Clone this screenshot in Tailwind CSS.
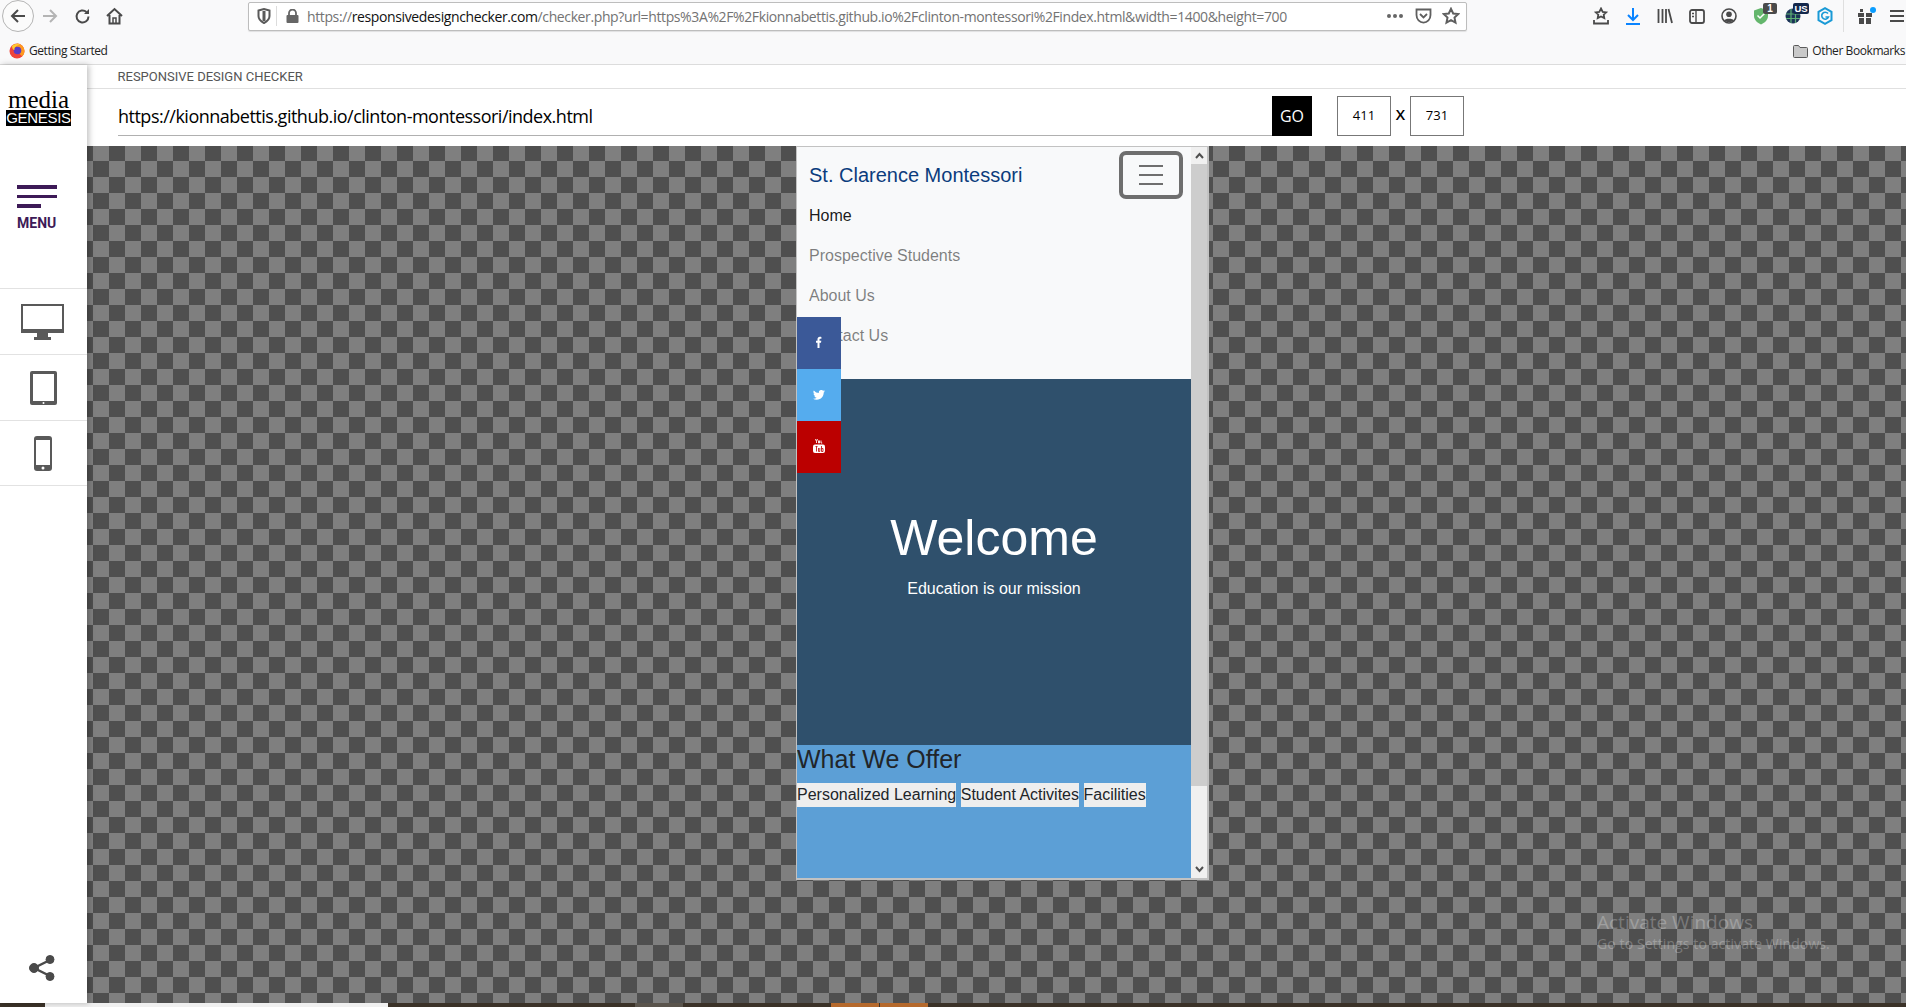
<!DOCTYPE html>
<html lang="en">
<head>
<meta charset="utf-8">
<title>Responsive Design Checker</title>
<script src="https://cdn.jsdelivr.net/npm/@tailwindcss/browser@4"></script>
</head>
<body class="bg-white">
<div class="w-[1906px] h-[1007px] overflow-hidden flex flex-col font-['Liberation_Sans',sans-serif]">

  <!-- browser chrome -->
  <header class="h-[65px] shrink-0 bg-[#f9f9fa] border-b border-[#dcdcdc] flex flex-col">
    <div class="h-8 flex items-center pl-[2px]">
      <div class="w-8 h-8 shrink-0 flex items-center justify-center rounded-full border border-[#b5b5b5] bg-[#fbfbfb]">
        <svg width="18" height="18" viewBox="0 0 18 18" fill="none" stroke="#4a4a4a" stroke-width="2"><path d="M16 9H3M9 3L3 9l6 6"/></svg>
      </div>
      <div class="w-8 h-8 shrink-0 flex items-center justify-center">
        <svg width="18" height="18" viewBox="0 0 18 18" fill="none" stroke="#b4b4b4" stroke-width="2"><path d="M2 9h13M9 3l6 6-6 6"/></svg>
      </div>
      <div class="w-8 h-8 shrink-0 flex items-center justify-center">
        <svg width="17" height="17" viewBox="0 0 17 17" fill="none" stroke="#4a4a4a" stroke-width="2"><path d="M14.5 8.500a6 6 0 1 1-2-4.500"/><path d="M15 1v5h-5z" fill="#4a4a4a" stroke="none"/></svg>
      </div>
      <div class="w-8 h-8 shrink-0 flex items-center justify-center">
        <svg width="17" height="18" viewBox="0 0 17 18" fill="none" stroke="#4a4a4a" stroke-width="2"><path d="M1 9l7.500-7L16 9M3.500 8v8.500h10V8"/><path d="M7 16.500V11h3v5.500" stroke-width="1.500"/></svg>
      </div>
      <div class="ml-[118px] w-[1219px] shrink-0 h-[29px] bg-white border border-[#bdbdbd] rounded-[2px] shadow-[0_1px_1px_rgba(0,0,0,0.1)] flex items-center">
        <div class="w-[27px] pl-[2px] flex justify-center">
          <svg width="14" height="16" viewBox="0 0 14 16" fill="none" stroke="#5a5a5a" stroke-width="2"><path d="M1.500 2.500 7 1l5.500 1.500V8c0 3-2.500 5.500-5.500 7C4 13.500 1.500 11 1.500 8z"/><path d="M7 3v10" stroke-width="3" stroke="#5a5a5a"/></svg>
        </div>
        <div class="w-px h-5 bg-[#dcdcdc]"></div>
        <div class="ml-[9px] w-[13px]">
          <svg width="13" height="14" viewBox="0 0 13 14" fill="none"><rect x="0.500" y="6" width="12" height="8" rx="1" fill="#666"/><path d="M3 7V4a3.500 3.500 0 0 1 7 0v3" stroke="#666" stroke-width="1.800"/></svg>
        </div>
        <div class="ml-[8px] text-[14px] whitespace-nowrap text-[#737373] font-['Open_Sans',sans-serif] tracking-[-0.385px]">https://<span class="text-[#111]">responsivedesignchecker.com</span>/checker.php?url=https%3A%2F%2Fkionnabettis.github.io%2Fclinton-montessori%2Findex.html&amp;width=1400&amp;height=700</div>
        <div class="ml-auto flex items-center pr-[1px]">
          <div class="w-7 flex justify-center gap-[2px]">
            <span class="w-[4px] h-[4px] rounded-full bg-[#666]"></span><span class="w-[4px] h-[4px] rounded-full bg-[#666]"></span><span class="w-[4px] h-[4px] rounded-full bg-[#666]"></span>
          </div>
          <div class="w-7 flex justify-center">
            <svg width="17" height="16" viewBox="0 0 17 16" fill="none" stroke="#5f5f5f" stroke-width="1.800"><path d="M1.500 1.500h14V7a6.500 7 0 0 1-14 0z"/><path d="M5 6l3.500 3.500L12 6"/></svg>
          </div>
          <div class="w-7 flex justify-center">
            <svg width="18" height="18" viewBox="0 0 18 18" fill="none" stroke="#5f5f5f" stroke-width="2"><path d="M9 1.800l2.200 4.700 5 .6-3.700 3.500 1 5L9 13.200l-4.500 2.400 1-5L1.800 7.100l5-.6z"/></svg>
          </div>
        </div>
      </div>
      <div class="ml-[118px] shrink-0 flex items-center">
        <div class="w-8 shrink-0 flex justify-center">
          <svg width="16" height="18" viewBox="0 0 16 18" fill="none" stroke="#4a4a4a" stroke-width="1.800"><path d="M8 1.500l1.700 3.300 3.500.5-2.500 2.400.6 3.400L8 9.500 4.700 11.100l.6-3.400L2.800 5.300l3.500-.5z"/><path d="M1 13v3.500h14V13"/></svg>
        </div>
        <div class="w-8 shrink-0 flex justify-center">
          <svg width="14" height="17" viewBox="0 0 14 17" fill="none" stroke="#0a84ff" stroke-width="2"><path d="M7 0v11M2 7l5 5 5-5M0 16h14"/></svg>
        </div>
        <div class="w-8 shrink-0 flex justify-center">
          <svg width="16" height="16" viewBox="0 0 16 16" fill="none" stroke="#4a4a4a" stroke-width="1.800"><path d="M1.500 1v14M5.500 1v14M9 1v14M11.500 1l3.500 14"/></svg>
        </div>
        <div class="w-8 shrink-0 flex justify-center">
          <svg width="16" height="15" viewBox="0 0 16 15" fill="none" stroke="#4a4a4a" stroke-width="1.800"><rect x="1" y="1" width="14" height="13" rx="2"/><path d="M7 1v13M3 4.500h2M3 7.500h2" stroke-width="1.400"/></svg>
        </div>
        <div class="w-8 shrink-0 flex justify-center">
          <svg width="16" height="16" viewBox="0 0 16 16" fill="none"><circle cx="8" cy="8" r="7" stroke="#4a4a4a" stroke-width="1.600"/><circle cx="8" cy="6.200" r="2.800" fill="#4a4a4a"/><path d="M3 12.500c1-2.500 9-2.500 10 0-2 2-8 2-10 0z" fill="#4a4a4a"/></svg>
        </div>
        <div class="w-8 shrink-0 flex justify-center relative">
          <svg width="16" height="18" viewBox="0 0 16 18"><path d="M8 1l7 2.500V9c0 4-3.500 7-7 8.500C4.500 16 1 13 1 9V3.500z" fill="#64b66c"/><path d="M4.500 8.500l2.500 2.500 4.500-4.500" fill="none" stroke="#fff" stroke-width="1.500"/></svg>
          <span class="absolute left-[18px] top-[-4px] w-[14px] h-[11px] rounded-[2px] bg-[#4a4a4a] text-white text-[10px] leading-[11px] font-bold text-center">1</span>
        </div>
        <div class="w-8 shrink-0 flex justify-center relative">
          <svg width="16" height="16" viewBox="0 0 16 16" fill="none"><circle cx="8" cy="8" r="7.500" fill="#1d3557"/><path d="M1 6h14M1 10.500h14M6 1v14M10.500 1v14" stroke="#5db075" stroke-width="1.200"/></svg>
          <span class="absolute left-[16px] top-[-5px] w-[16px] h-[11px] rounded-[2px] bg-[#14284b] text-white text-[9.500px] leading-[11px] font-bold text-center">US</span>
        </div>
        <div class="w-8 shrink-0 flex justify-center">
          <svg width="16" height="18" viewBox="0 0 16 18" fill="none"><path d="M8 1.200l6.500 3.700v8.200L8 16.800l-6.500-3.700V4.900z" stroke="#1a9ad6" stroke-width="2"/><path d="M11 6.500a3.500 3.500 0 1 0 .5 3.500H8.500" stroke="#1a9ad6" stroke-width="1.600"/></svg>
        </div>
        <div class="w-px h-[32px] shrink-0 bg-[#dfdfdf] ml-[2px]"></div>
        <div class="w-8 shrink-0 ml-[5px] flex justify-center relative">
          <svg width="14" height="15" viewBox="0 0 14 15" fill="#4a4a4a"><rect x="0" y="4" width="6" height="4"/><rect x="8" y="4" width="6" height="4"/><rect x="1" y="9" width="5" height="6"/><rect x="8" y="9" width="5" height="6"/><rect x="2" y="0" width="3" height="3"/></svg>
          <span class="absolute left-[21px] top-[-2px] w-[6px] h-[6px] rounded-full bg-[#0a9dff]"></span>
        </div>
        <div class="w-8 shrink-0 flex flex-col items-center gap-[3px]">
          <span class="w-[14px] h-[2px] bg-[#4a4a4a]"></span><span class="w-[14px] h-[2px] bg-[#4a4a4a]"></span><span class="w-[14px] h-[2px] bg-[#4a4a4a]"></span>
        </div>
      </div>
    </div>
    <div class="flex-1 flex items-center pl-[9px] pr-[1px] pt-[5px] text-[12px] text-[#222] font-['Open_Sans',sans-serif] tracking-[-0.42px]">
      <svg width="16" height="16" viewBox="0 0 16 16"><circle cx="8" cy="8" r="7.500" fill="#f0443a"/><path d="M8 .5a7.500 7.500 0 0 1 7.500 7.500c0 2-1 4-2.500 5.300L8 8z" fill="#ff9a1f"/><circle cx="8.500" cy="7.500" r="3.800" fill="#5b3cc4"/><path d="M3 3c2-2 6-3 8-1.500-2 0-3 1-3.500 2C6 4 5 5 5.500 7 4 7 3 5 3 3z" fill="#ffcb2e"/></svg>
      <span class="ml-[4px]">Getting Started</span>
      <svg class="ml-auto" width="15" height="14" viewBox="0 0 15 14" fill="#c9c9c9" stroke="#5a5a5a"><path d="M.5 2.500a1 1 0 0 1 1-1h4l1.500 2h6.500a1 1 0 0 1 1 1v8a1 1 0 0 1-1 1h-12a1 1 0 0 1-1-1z"/></svg>
      <span class="ml-[4px] whitespace-nowrap">Other Bookmarks</span>
    </div>
  </header>

  <div class="flex-1 min-h-0 flex">
    <!-- tool sidebar -->
    <aside class="w-[87px] shrink-0 bg-white flex flex-col relative z-10 shadow-[2px_0_6px_rgba(0,0,0,0.25)]">
      <div class="h-[223px] shrink-0 flex flex-col">
        <div class="mt-[26px] w-[65px] ml-[6px] flex flex-col items-center">
          <span class="text-[25px] leading-[18px] text-black font-['Liberation_Serif',serif]">media</span>
          <span class="mt-[1px] w-[65px] h-[16px] bg-black text-white text-[15px] leading-[16px] text-center tracking-[-0.3px]">GENESIS</span>
        </div>
        <div class="mt-[59px] ml-[17px] flex flex-col gap-[6px]">
          <span class="w-10 h-[3.500px] bg-[#3d1a57]"></span>
          <span class="w-10 h-[3.500px] bg-[#3d1a57]"></span>
          <span class="w-6 h-[3.500px] bg-[#3d1a57]"></span>
        </div>
        <span class="mt-[8px] ml-[17px] text-[14px] leading-[14px] font-bold text-[#3d1a57] font-['Roboto',sans-serif]">MENU</span>
      </div>
      <div class="h-[66px] border-t border-[#e2e2e2] flex items-center justify-center">
        <svg class="mr-[2px]" width="43" height="36" viewBox="0 0 43 36"><path d="M0 0h43v29H27v4h3v3H13v-3h3v-4H0z" fill="#595959"/><rect x="2" y="2" width="39" height="23" fill="#fff"/></svg>
      </div>
      <div class="h-[66px] border-t border-[#e2e2e2] flex items-center justify-center">
        <svg class="mr-[1px]" width="27" height="34" viewBox="0 0 27 34"><rect width="27" height="34" rx="2" fill="#595959"/><rect x="3" y="3" width="21" height="27" fill="#fff"/><circle cx="13.500" cy="32" r="1" fill="#fff"/></svg>
      </div>
      <div class="h-[66px] border-t border-b border-[#e2e2e2] flex items-center justify-center">
        <svg class="mr-[2px]" width="18" height="35" viewBox="0 0 18 35"><rect width="18" height="35" rx="3" fill="#595959"/><rect x="2" y="4" width="14" height="25" fill="#fff"/><circle cx="9" cy="32" r="1.500" fill="#fff"/></svg>
      </div>
      <div class="mt-auto mb-[22px] flex justify-center pr-[3px]">
        <svg width="26" height="26" viewBox="0 0 26 26" fill="#4a4a4a" stroke="#4a4a4a"><path d="M21 5L5 13l16 8" fill="none" stroke-width="2.500"/><circle cx="21" cy="4.500" r="4"/><circle cx="5" cy="13" r="4.500"/><circle cx="21" cy="21.500" r="4"/></svg>
      </div>
    </aside>

    <main class="flex-1 min-w-0 flex flex-col bg-white">
      <div class="h-6 shrink-0 border-b border-[#e0e0e0] pl-[30.500px] flex items-center text-[13px] text-[#555] font-['Roboto',sans-serif]">RESPONSIVE DESIGN CHECKER</div>
      <div class="h-[57px] shrink-0 flex items-start pt-[7px] pl-[31px]">
        <div class="w-[1154px] h-[40px] pt-[2px] border-b border-[#b0b0b0] flex items-center text-[18px] text-black font-['Open_Sans',sans-serif] tracking-[-0.5px]">https://kionnabettis.github.io/clinton-montessori/index.html</div>
        <div class="w-10 h-10 bg-black text-white text-[16px] flex items-center justify-center font-['Open_Sans',sans-serif]">GO</div>
        <div class="ml-[25px] w-[54px] h-10 border border-[#777] flex items-center justify-center text-[13px] text-black font-['Open_Sans',sans-serif]">411</div>
        <div class="w-[19px] h-[37px] flex items-center justify-center text-[15px] font-semibold text-black font-['Open_Sans',sans-serif]">X</div>
        <div class="w-[54px] h-10 border border-[#777] flex items-center justify-center text-[13px] text-black font-['Open_Sans',sans-serif]">731</div>
      </div>

      <!-- canvas with the framed page -->
      <div class="flex-1 min-h-0 relative bg-[repeating-conic-gradient(#4f4f4f_0_25%,#7f7f7f_0_50%)] bg-[length:32px_32px] bg-[position:-10px_15px]">
        <div class="ml-[709px] w-[413px] h-[734px] border-t border-l border-r-2 border-b-2 border-[#c2c2c2] bg-[#f0f0f0] flex">
          <div class="w-[395px] h-[731px] relative flex flex-col overflow-hidden bg-white">
            <nav class="h-[232px] shrink-0 bg-[#f8f9fa] pr-[8px]">
              <div class="h-12 flex items-start">
                <span class="ml-3 mt-[14px] text-[20px] leading-[28px] text-[#0b3c7d]">St. Clarence Montessori</span>
                <div class="ml-auto mt-1 w-16 h-12 shrink-0 border-4 border-[#6e6e6e] rounded-[7px] flex flex-col items-center justify-center gap-[7px]">
                  <span class="w-6 h-[2px] bg-[#6e6e6e]"></span>
                  <span class="w-6 h-[2px] bg-[#6e6e6e]"></span>
                  <span class="w-6 h-[2px] bg-[#6e6e6e]"></span>
                </div>
              </div>
              <ul class="mt-[1px] text-[16px] leading-10 pl-3">
                <li class="text-black/90">Home</li>
                <li class="text-black/50">Prospective Students</li>
                <li class="text-black/50">About Us</li>
                <li class="text-black/50">Contact Us</li>
              </ul>
            </nav>
            <section class="h-[366px] shrink-0 bg-[#2f506c] text-white flex flex-col items-center pt-[130px]">
              <h1 class="text-[50px] leading-[58px]">Welcome</h1>
              <p class="mt-[10px] text-[16px] leading-6">Education is our mission</p>
            </section>
            <section class="flex-1 bg-[#5c9fd6] text-[#212529]">
              <h2 class="text-[25px] leading-[29px]">What We Offer</h2>
              <div class="mt-[9px] flex gap-[4.500px] text-[16px] leading-6">
                <a class="bg-[#eeeeee]">Personalized Learning</a>
                <a class="bg-[#eeeeee]">Student Activites</a>
                <a class="bg-[#eeeeee]">Facilities</a>
              </div>
            </section>
            <!-- floating social bar -->
            <div class="absolute left-0 top-[170px] w-11 flex flex-col text-white">
              <div class="h-[52px] pb-[2px] bg-[#3b5998] flex items-center justify-center">
                <svg width="12" height="12" viewBox="0 0 12 12" fill="#fff"><path d="M4.500 12V6.700H3V4.700h1.500V3.300C4.500 1.700 5.400.8 6.900.8c.7 0 1.200 0 1.500.1v1.800H7.400c-.7 0-.9.400-.9.900v1.100h1.800l-.3 2H6.500V12z"/></svg>
              </div>
              <div class="h-[52px] bg-[#55acee] flex items-center justify-center">
                <svg width="12" height="10" viewBox="0 0 24 20" fill="#fff"><path d="M24 2.400a9.800 9.800 0 0 1-2.800.8A4.900 4.900 0 0 0 23.300.5a9.800 9.800 0 0 1-3.100 1.200 4.900 4.900 0 0 0-8.400 4.500A14 14 0 0 1 1.700.9a4.900 4.900 0 0 0 1.500 6.600 4.900 4.900 0 0 1-2.200-.6c0 2.400 1.700 4.400 3.900 4.900a4.900 4.900 0 0 1-2.200.1 4.900 4.900 0 0 0 4.600 3.400A9.900 9.900 0 0 1 0 17.300 14 14 0 0 0 7.500 19.500c9.100 0 14.200-7.700 13.900-14.500A10 10 0 0 0 24 2.400z"/></svg>
              </div>
              <div class="h-[52px] pb-[2px] bg-[#bb0000] flex items-center justify-center">
                <svg width="12" height="14" viewBox="0 0 12 14"><path d="M2.500 0l1 2.500L4.500 0M3.500 2.500V4M5.500 1.500v2.500h1v-2.500M8 1.500v2.500h1.200" fill="none" stroke="#fff" stroke-width=".9"/><rect x="0" y="5.500" width="12" height="8.500" rx="2" fill="#fff"/><path d="M2.500 7.500h2M3.500 7.500v5M5.500 9v3.500h1.300V9M8.500 7v5.500h1.500V9.500H8.500" fill="none" stroke="#bb0000" stroke-width=".8"/></svg>
              </div>
            </div>
          </div>
          <!-- scrollbar -->
          <div class="w-4 h-[731px] flex flex-col items-center bg-[#f0f0f0]">
            <div class="h-[17px] shrink-0 flex items-center justify-center">
              <svg width="9" height="7" viewBox="0 0 9 7" fill="none" stroke="#505050" stroke-width="2"><path d="M1 6l3.500-4L8 6"/></svg>
            </div>
            <div class="w-full h-[622px] shrink-0 bg-[#cdcdcd]"></div>
            <div class="mt-auto h-[17px] shrink-0 flex items-center justify-center">
              <svg width="9" height="7" viewBox="0 0 9 7" fill="none" stroke="#505050" stroke-width="2"><path d="M1 1l3.500 4L8 1"/></svg>
            </div>
          </div>
        </div>
        <!-- watermark -->
        <div class="absolute left-[1510px] top-[763px] text-white/25 font-['Open_Sans',sans-serif] whitespace-nowrap">
          <div class="text-[19px] leading-[26px]">Activate Windows</div>
          <div class="text-[14px] leading-[18px] tracking-[0.1px]">Go to Settings to activate Windows.</div>
        </div>
      </div>
    </main>
  </div>

  <!-- taskbar sliver -->
  <footer class="h-1 shrink-0 bg-[#3b3228] flex">
    <div class="ml-[45px] w-[343px] bg-[#f0f0f0]"></div>
    <div class="ml-[247px] w-[48px] bg-[#5a544c]"></div>
    <div class="ml-[148px] w-[48px] bg-[#b5692c]"></div>
    <div class="ml-px w-[48px] bg-[#b5692c]"></div>
  </footer>
</div>
</body>
</html>
